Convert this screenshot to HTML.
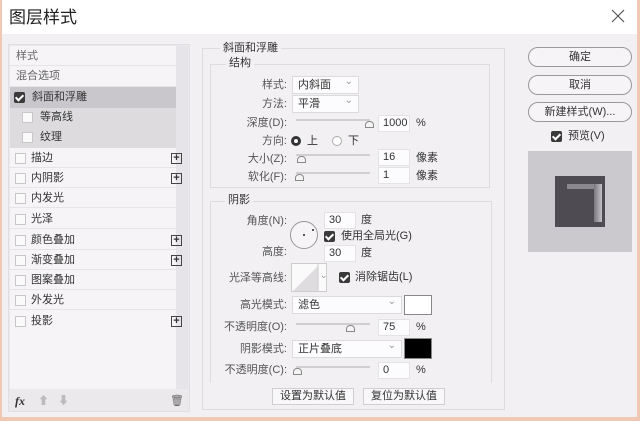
<!DOCTYPE html>
<html><head><meta charset="utf-8"><style>
*{margin:0;padding:0;box-sizing:border-box}
body{width:640px;height:421px;overflow:hidden;background:#f2f0f3;font-family:"Liberation Sans","Noto Sans CJK SC",sans-serif;font-size:11px;color:#333;position:relative}
.a{position:absolute}
.t{position:absolute;white-space:nowrap;line-height:14px}
.cb{position:absolute;width:11px;height:11px;border:1px solid #c8c6ca;background:#fafafa}
.cbc{position:absolute;width:11px;height:11px;background:#3a3a3a;border-radius:2px}
.cbc:after{content:"";position:absolute;left:3px;top:1px;width:3px;height:6px;border:solid #fff;border-width:0 2px 2px 0;transform:rotate(45deg)}
.item{position:absolute;left:10px;width:166px;height:20px;border-bottom:1px solid #e6e4e8}
.plus{position:absolute;left:161px;width:11px;height:11px;border:1px solid #444;font-size:11px;line-height:8px;text-align:center;font-weight:bold;color:#333}
.in{position:absolute;height:17px;background:#fcfbfd;border:1px solid #e4e2e6;padding-left:4px;line-height:15px;font-size:11px}
.sel{position:absolute;height:18px;background:#fcfbfd;border:1px solid #dcdadd;padding-left:5px;line-height:16px}
.sel:after{content:"⌄";position:absolute;right:5px;top:-3px;color:#999;font-size:10px}
.sl{position:absolute;height:2px;background:#d0ced2}
.th{position:absolute;width:9px;height:7px;border:1px solid #888;border-radius:4px 4px 0 0;background:#f4f4f4}
.btn{position:absolute;left:528px;width:104px;height:20px;border:1px solid #9a989c;border-radius:10px;text-align:center;line-height:18px;background:#f6f4f7}
.lbl{position:absolute;text-align:right;white-space:nowrap;line-height:14px;color:#555}
</style></head><body>
<div class="a" style="left:0;top:0;width:640px;height:34px;background:#fff"></div>
<div class="t" style="left:9px;top:8px;font-size:17px;line-height:20px;color:#222">图层样式</div>
<svg class="a" style="left:611px;top:9px" width="14" height="14"><path d="M1 1L13 13M13 1L1 13" stroke="#555" stroke-width="1.2"/></svg>
<div class="a" style="left:0;top:0;width:2px;height:421px;background:#f0c8b4"></div>
<div class="a" style="right:0;top:0;width:3px;height:421px;background:#f0c8b4"></div>
<div class="a" style="left:0;top:417px;width:640px;height:4px;background:#f0c8b4"></div>

<!-- left panel -->
<div class="a" style="left:8px;top:44px;width:182px;height:368px;border:1px solid #e0dee2;background:#ebe9ec"></div>
<div class="a" style="left:10px;top:46px;width:166px;height:343px;background:#f6f4f7"></div>
<div class="a" style="left:176px;top:46px;width:12px;height:343px;background:#e6e4e8"></div>
<div class="item" style="top:46px"><div class="t" style="left:6px;top:3px;color:#666">样式</div></div>
<div class="item" style="top:67px"><div class="t" style="left:6px;top:2px;color:#666">混合选项</div></div>
<div class="a" style="left:10px;top:87px;width:166px;height:21px;background:#c9c7cb"></div>
<div class="cbc" style="left:14px;top:92px"></div><div class="t" style="left:32px;top:90px">斜面和浮雕</div>
<div class="a" style="left:10px;top:108px;width:166px;height:40px;background:#dddbde"></div>
<div class="cb" style="left:22px;top:112px"></div><div class="t" style="left:40px;top:110px">等高线</div>
<div class="cb" style="left:22px;top:132px"></div><div class="t" style="left:40px;top:130px">纹理</div>
<div class="item" style="top:148px"><div class="cb" style="left:5px;top:5px"></div><div class="t" style="left:21px;top:3px">描边</div><div class="plus" style="top:5px">+</div></div>
<div class="item" style="top:168px"><div class="cb" style="left:5px;top:5px"></div><div class="t" style="left:21px;top:3px">内阴影</div><div class="plus" style="top:5px">+</div></div>
<div class="item" style="top:188px"><div class="cb" style="left:5px;top:5px"></div><div class="t" style="left:21px;top:3px">内发光</div></div>
<div class="item" style="top:209px"><div class="cb" style="left:5px;top:5px"></div><div class="t" style="left:21px;top:3px">光泽</div></div>
<div class="item" style="top:230px"><div class="cb" style="left:5px;top:5px"></div><div class="t" style="left:21px;top:3px">颜色叠加</div><div class="plus" style="top:5px">+</div></div>
<div class="item" style="top:250px"><div class="cb" style="left:5px;top:5px"></div><div class="t" style="left:21px;top:3px">渐变叠加</div><div class="plus" style="top:5px">+</div></div>
<div class="item" style="top:270px"><div class="cb" style="left:5px;top:5px"></div><div class="t" style="left:21px;top:3px">图案叠加</div></div>
<div class="item" style="top:290px"><div class="cb" style="left:5px;top:5px"></div><div class="t" style="left:21px;top:3px">外发光</div></div>
<div class="item" style="top:311px;border:none"><div class="cb" style="left:5px;top:5px"></div><div class="t" style="left:21px;top:3px">投影</div><div class="plus" style="top:5px">+</div></div>
<div class="t" style="left:15px;top:394px;font-style:italic;font-weight:bold;font-family:'Liberation Serif',serif;font-size:12px">fx</div>
<div class="t" style="left:38px;top:394px;color:#bbb">⬆</div>
<div class="t" style="left:58px;top:394px;color:#bbb">⬇</div>
<div class="t" style="left:170px;top:394px;color:#666">🗑</div>

<!-- right group -->
<div class="a" style="left:202px;top:48px;width:303px;height:362px;border:1px solid #dedce0"></div>
<div class="t" style="left:220px;top:41px;background:#f2f0f3;padding:0 3px">斜面和浮雕</div>
<div class="a" style="left:210px;top:64px;width:280px;height:124px;border:1px solid #dedce0"></div>
<div class="t" style="left:226px;top:56px;background:#f2f0f3;padding:0 3px">结构</div>
<div class="lbl" style="left:230px;width:57px;top:78px">样式:</div><div class="sel" style="left:292px;top:76px;width:67px">内斜面</div>
<div class="lbl" style="left:230px;width:57px;top:97px">方法:</div><div class="sel" style="left:292px;top:95px;width:67px">平滑</div>
<div class="lbl" style="left:230px;width:57px;top:116px">深度(D):</div>
<div class="sl" style="left:296px;top:119px;width:74px"></div><div class="th" style="left:365px;top:121px"></div>
<div class="in" style="left:378px;top:115px;width:32px">1000</div><div class="t" style="left:416px;top:116px">%</div>
<div class="lbl" style="left:230px;width:57px;top:134px">方向:</div>
<div class="a" style="left:291px;top:136px;width:10px;height:10px;border-radius:50%;border:3px solid #333;background:#fff"></div><div class="t" style="left:307px;top:134px">上</div>
<div class="a" style="left:332px;top:136px;width:10px;height:10px;border-radius:50%;border:1px solid #aaa;background:#fff"></div><div class="t" style="left:348px;top:134px">下</div>
<div class="lbl" style="left:230px;width:57px;top:152px">大小(Z):</div>
<div class="sl" style="left:296px;top:154px;width:74px"></div><div class="th" style="left:297px;top:156px"></div>
<div class="in" style="left:378px;top:149px;width:32px">16</div><div class="t" style="left:416px;top:151px">像素</div>
<div class="lbl" style="left:230px;width:57px;top:170px">软化(F):</div>
<div class="sl" style="left:296px;top:172px;width:74px"></div><div class="th" style="left:295px;top:174px"></div>
<div class="in" style="left:378px;top:167px;width:32px">1</div><div class="t" style="left:416px;top:169px">像素</div>

<div class="a" style="left:210px;top:201px;width:282px;height:182px;border:1px solid #dedce0;border-bottom:none"></div>
<div class="t" style="left:225px;top:193px;background:#f2f0f3;padding:0 3px">阴影</div>
<div class="lbl" style="left:230px;width:57px;top:214px">角度(N):</div>
<div class="a" style="left:290px;top:221px;width:28px;height:28px;border-radius:50%;border:1px solid #999;background:#f6f4f7"></div>
<div class="a" style="left:303px;top:234px;width:2px;height:2px;background:#555"></div>
<div class="a" style="left:312px;top:229px;width:2px;height:2px;background:#555"></div>
<div class="in" style="left:324px;top:212px;width:32px">30</div><div class="t" style="left:361px;top:213px">度</div>
<div class="cbc" style="left:324px;top:231px"></div><div class="t" style="left:341px;top:229px">使用全局光(G)</div>
<div class="lbl" style="left:230px;width:57px;top:245px">高度:</div>
<div class="in" style="left:324px;top:245px;width:32px">30</div><div class="t" style="left:361px;top:246px">度</div>
<div class="lbl" style="left:215px;width:72px;top:271px">光泽等高线:</div>
<div class="a" style="left:291px;top:263px;width:36px;height:29px;border:1px solid #ccc;background:#fafafa;overflow:hidden">
<svg width="36" height="29"><path d="M0 28L26 2V28Z" fill="#dedcdf"/><path d="M26 0V29" stroke="#ccc"/></svg></div>
<div class="t" style="left:320px;top:268px;color:#999;font-size:9px">⌄</div>
<div class="cbc" style="left:339px;top:272px"></div><div class="t" style="left:355px;top:270px">消除锯齿(L)</div>
<div class="lbl" style="left:230px;width:57px;top:298px">高光模式:</div>
<div class="sel" style="left:292px;top:296px;width:110px">滤色</div>
<div class="a" style="left:404px;top:295px;width:28px;height:20px;border:1px solid #888;background:#fff"></div>
<div class="lbl" style="left:215px;width:72px;top:320px">不透明度(O):</div>
<div class="sl" style="left:296px;top:323px;width:74px"></div><div class="th" style="left:346px;top:325px"></div>
<div class="in" style="left:378px;top:319px;width:32px">75</div><div class="t" style="left:416px;top:320px">%</div>
<div class="lbl" style="left:230px;width:57px;top:342px">阴影模式:</div>
<div class="sel" style="left:292px;top:340px;width:110px">正片叠底</div>
<div class="a" style="left:404px;top:338px;width:28px;height:21px;border:1px solid #888;background:#000"></div>
<div class="lbl" style="left:215px;width:72px;top:363px">不透明度(C):</div>
<div class="sl" style="left:296px;top:366px;width:74px"></div><div class="th" style="left:293px;top:368px"></div>
<div class="in" style="left:378px;top:362px;width:32px">0</div><div class="t" style="left:416px;top:363px">%</div>
<div class="a" style="left:272px;top:388px;width:82px;height:17px;border:1px solid #d0ced2;background:#f8f7f9;text-align:center;line-height:15px">设置为默认值</div>
<div class="a" style="left:363px;top:388px;width:82px;height:17px;border:1px solid #d0ced2;background:#f8f7f9;text-align:center;line-height:15px">复位为默认值</div>

<!-- right buttons -->
<div class="btn" style="top:47px">确定</div>
<div class="btn" style="top:75px">取消</div>
<div class="btn" style="top:102px">新建样式(W)...</div>
<div class="cbc" style="left:551px;top:131px"></div><div class="t" style="left:568px;top:129px">预览(V)</div>
<div class="a" style="left:528px;top:151px;width:104px;height:101px;background:#cbc9cd"></div>
<div class="a" style="left:555px;top:176px;width:50px;height:51px;background:#4e4c52"></div>
<div class="a" style="left:567px;top:184px;width:30px;height:5px;background:#8a888e"></div>
<div class="a" style="left:594px;top:184px;width:8px;height:38px;background:linear-gradient(90deg,#7a787e,#c4c2c6)"></div>
</body></html>
